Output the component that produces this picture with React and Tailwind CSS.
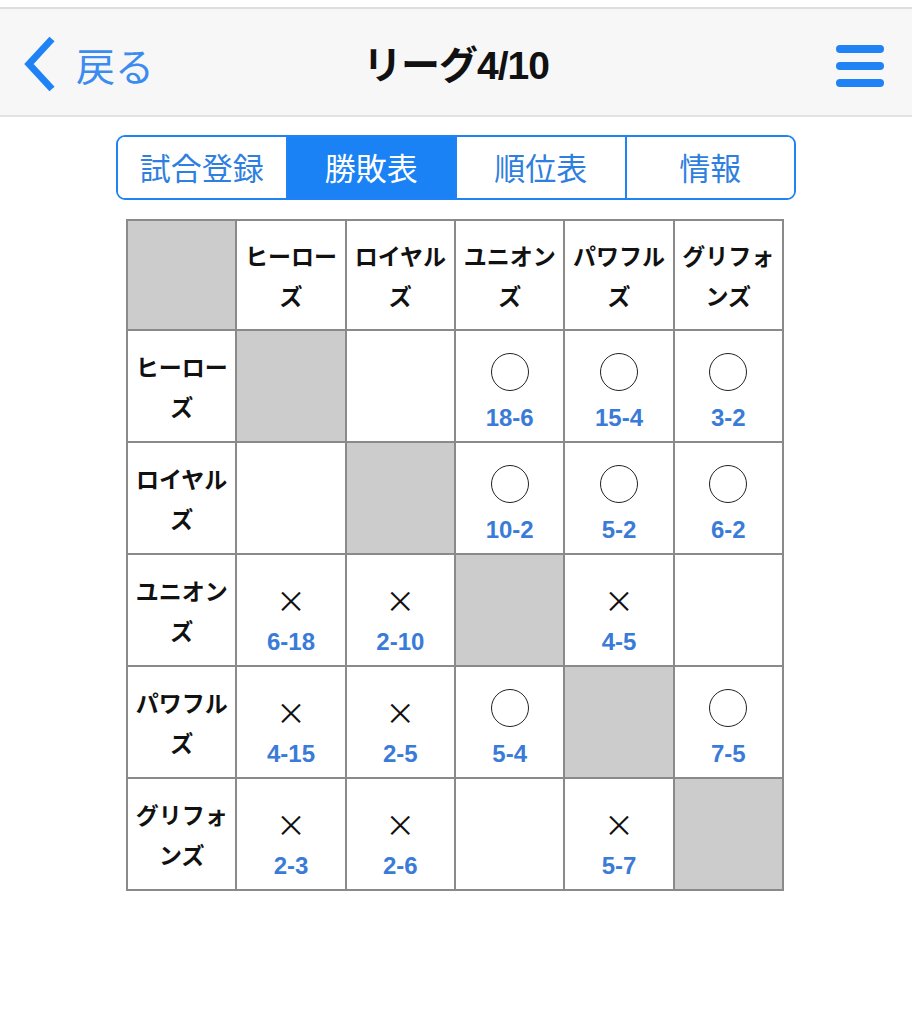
import { useState } from "react";

const TEAMS = ["ヒーローズ", "ロイヤルズ", "ユニオンズ", "パワフルズ", "グリフォンズ"];

// results[row][col] = [mark, score] ; null = no game yet
const RESULTS = [
  [null, null, ["o", "18-6"], ["o", "15-4"], ["o", "3-2"]],
  [null, null, ["o", "10-2"], ["o", "5-2"], ["o", "6-2"]],
  [["x", "6-18"], ["x", "2-10"], null, ["x", "4-5"], null],
  [["x", "4-15"], ["x", "2-5"], ["o", "5-4"], null, ["o", "7-5"]],
  [["x", "2-3"], ["x", "2-6"], null, ["x", "5-7"], null],
];

const TABS = ["試合登録", "勝敗表", "順位表", "情報"];

const jp = { fontFamily: '"Noto Sans CJK JP", "Noto Sans", sans-serif' };
const num = { fontFamily: '"Liberation Sans", "Noto Sans CJK JP", sans-serif' };

function Cell({ res }) {
  if (!res) return null;
  const [mark, score] = res;
  return (
    <div className="flex flex-col items-center pt-[12px]">
      {mark === "o" ? (
        <div className="w-[38px] h-[38px] rounded-full border-[1.5px] border-[#222]" />
      ) : (
        <div className="h-[38px] flex items-center translate-y-[3px] text-[30px] leading-none text-[#111]" style={jp}>×</div>
      )}
      <div className="mt-[13px] text-[24px] leading-[28px] font-bold text-[#3a7bd8]" style={num}>{score}</div>
    </div>
  );
}

export default function App() {
  const [tab, setTab] = useState(1);

  return (
    <div className="w-[912px] min-h-[1024px] bg-white" style={jp}>
      <div className="h-[9px] bg-white border-b-2 border-[#dedede]" />

      {/* nav bar */}
      <header className="h-[108px] bg-[#f7f7f7] border-b-2 border-[#e3e3e3] flex items-center justify-between px-[22px] relative">
        <button className="flex items-center gap-[20px] mt-[4px]">
          <svg width="34" height="56" viewBox="0 0 34 56">
            <path d="M30 3 L7 28 L30 53" fill="none" stroke="#1f83f5" strokeWidth="7" strokeLinejoin="miter" />
          </svg>
          <span className="text-[39px] leading-none text-[#3b8cef]">戻る</span>
        </button>
        <h1 className="absolute left-1/2 -translate-x-1/2 mt-[4px] text-[39px] font-bold text-[#111] leading-none tracking-tight">
          リーグ<span style={num}>4/10</span>
        </h1>
        <button className="flex flex-col gap-[9px] mr-[6px] mt-[8px]">
          <span className="block w-[48px] h-[8px] rounded-full bg-[#1f83f5]" />
          <span className="block w-[48px] h-[8px] rounded-full bg-[#1f83f5]" />
          <span className="block w-[48px] h-[8px] rounded-full bg-[#1f83f5]" />
        </button>
      </header>

      {/* segmented control */}
      <div className="flex justify-center mt-[18px]">
        <div className="flex w-[680px] h-[65px] border-2 border-[#1f83f5] rounded-[9px] overflow-hidden">
          {TABS.map((t, i) => (
            <button
              key={t}
              onClick={() => setTab(i)}
              className={
                "flex-1 flex items-center justify-center text-[31px] " +
                (i > 0 ? "border-l-2 border-[#1f83f5] " : "") +
                (tab === i ? "bg-[#1a82f4] text-white" : "bg-white text-[#2f7fe0]")
              }
            >
              {t}
            </button>
          ))}
        </div>
      </div>

      {/* win-loss table */}
      <div className="flex justify-center mt-[19px]">
        <table className="table-fixed border-collapse w-[658px] ml-[-2px]">
          <tbody>
            <tr className="h-[110px]">
              <td className="border-2 border-[#8a8a8a] bg-[#cccccc]" />
              {TEAMS.map((t) => (
                <td key={t} className="border-2 border-[#8a8a8a] text-center align-middle px-[3px] text-[23px] leading-[40px] font-semibold text-[#111] break-all">
                  {t}
                </td>
              ))}
            </tr>
            {TEAMS.map((t, r) => (
              <tr key={t} className="h-[112px]">
                <td className="border-2 border-[#8a8a8a] text-center align-middle px-[3px] text-[23px] leading-[40px] font-semibold text-[#111] break-all">
                  {t}
                </td>
                {RESULTS[r].map((res, c) => (
                  <td
                    key={c}
                    className={"border-2 border-[#8a8a8a] align-middle " + (r === c ? "bg-[#cccccc]" : "bg-white")}
                  >
                    <Cell res={res} />
                  </td>
                ))}
              </tr>
            ))}
          </tbody>
        </table>
      </div>
    </div>
  );
}
